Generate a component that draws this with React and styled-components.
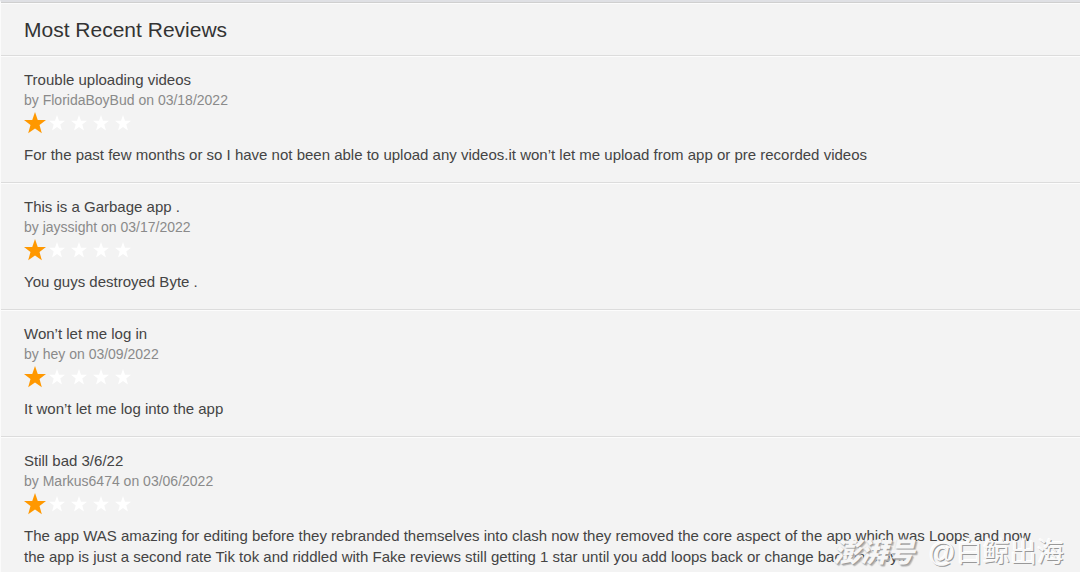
import React from "react";
import styled, { createGlobalStyle } from "styled-components";

const GlobalStyle = createGlobalStyle`
  body {
    margin: 0;
    background: #f3f3f3;
    font-family: "Liberation Sans", Arial, sans-serif;
    color: #444;
  }
`;

const Page = styled.main`
  position: relative;
  height: 100vh;
  overflow: hidden;
  box-sizing: border-box;
  border-top: 2px solid #dfe0e4;
  border-left: 1px solid #fbfbfb;
`;

const Header = styled.header`
  padding: 13px 32px 12px 23px;
  border-top: 1px solid #cfcfcf;
  box-shadow: inset 0 1px 0 #fbfbfb;
`;

const Heading = styled.h1`
  margin: 0;
  font-size: 21px;
  line-height: 27px;
  font-weight: 400;
  color: #333;
`;

const Review = styled.article`
  padding: 14px 32px 17px 23px;
  border-top: 1px solid #dcdcdc;
  box-shadow: inset 0 1px 0 #fcfcfc;
`;

const Title = styled.h2`
  margin: 0;
  font-size: 15px;
  line-height: 20px;
  font-weight: 400;
`;

const Byline = styled.p`
  margin: 0;
  font-size: 14px;
  line-height: 20px;
  color: #8a8a8a;
`;

const Stars = styled.div`
  display: flex;
  height: 22px;
  margin: 2px 0 10px;
`;

const StarSlot = styled.span`
  display: flex;
  align-items: center;
  justify-content: center;
  width: 22px;
`;

const Star = styled.svg`
  width: ${(p) => (p.$filled ? 22 : 16)}px;
  height: ${(p) => (p.$filled ? 22 : 16)}px;
  fill: ${(p) => (p.$filled ? "#ff9800" : "#fff")};
`;

const Body = styled.p`
  margin: 0;
  font-size: 15px;
  line-height: 21px;
`;

const Watermark = styled.div`
  position: absolute;
  right: 16px;
  bottom: 2px;
  display: flex;
  align-items: center;
  gap: 14px;
  font-family: "Liberation Sans", "Noto Sans CJK SC", sans-serif;
  line-height: 34px;
  white-space: nowrap;
`;

const Brand = styled.span`
  font-size: 27px;
  font-weight: 900;
  font-style: italic;
  color: #f6f6f6;
  text-shadow: 1px 1px 1px #999, 2px 2px 1px #bbb, -1px 0 0 #e8e8e8;
`;

const Account = styled.span`
  font-size: 27px;
  color: #f8f8f8;
  text-shadow: 1px 1px 0 #999, -1px -1px 0 #fff;
`;

const reviews = [
  { title: "Trouble uploading videos", author: "FloridaBoyBud", date: "03/18/2022", rating: 1,
    text: "For the past few months or so I have not been able to upload any videos.it won’t let me upload from app or pre recorded videos" },
  { title: "This is a Garbage app .", author: "jayssight", date: "03/17/2022", rating: 1,
    text: "You guys destroyed Byte ." },
  { title: "Won’t let me log in", author: "hey", date: "03/09/2022", rating: 1,
    text: "It won’t let me log into the app" },
  { title: "Still bad 3/6/22", author: "Markus6474", date: "03/06/2022", rating: 1,
    text: "The app WAS amazing for editing before they rebranded themselves into clash now they removed the core aspect of the app which was Loops and now the app is just a second rate Tik tok and riddled with Fake reviews still getting 1 star until you add loops back or change back into byte" },
];

function Rating({ value }) {
  return (
    <Stars role="img" aria-label={`${value} out of 5 stars`}>
      {[1, 2, 3, 4, 5].map((n) => (
        <StarSlot key={n}>
          <Star $filled={n <= value} viewBox="0 0 20 20" aria-hidden="true">
            <path d="M10 0 L12.5 7.2 H20 L14.1 11.8 L16.2 19.4 L10 15 L3.8 19.4 L5.9 11.8 L0 7.2 H7.5 Z" />
          </Star>
        </StarSlot>
      ))}
    </Stars>
  );
}

export default function App() {
  return (
    <>
      <GlobalStyle />
      <Page>
        <Header>
          <Heading>Most Recent Reviews</Heading>
        </Header>
        {reviews.map((r) => (
          <Review key={r.date}>
            <Title>{r.title}</Title>
            <Byline>by {r.author} on {r.date}</Byline>
            <Rating value={r.rating} />
            <Body>{r.text}</Body>
          </Review>
        ))}
        <Watermark>
          <Brand>澎湃号</Brand>
          <Account>@白鲸出海</Account>
        </Watermark>
      </Page>
    </>
  );
}
